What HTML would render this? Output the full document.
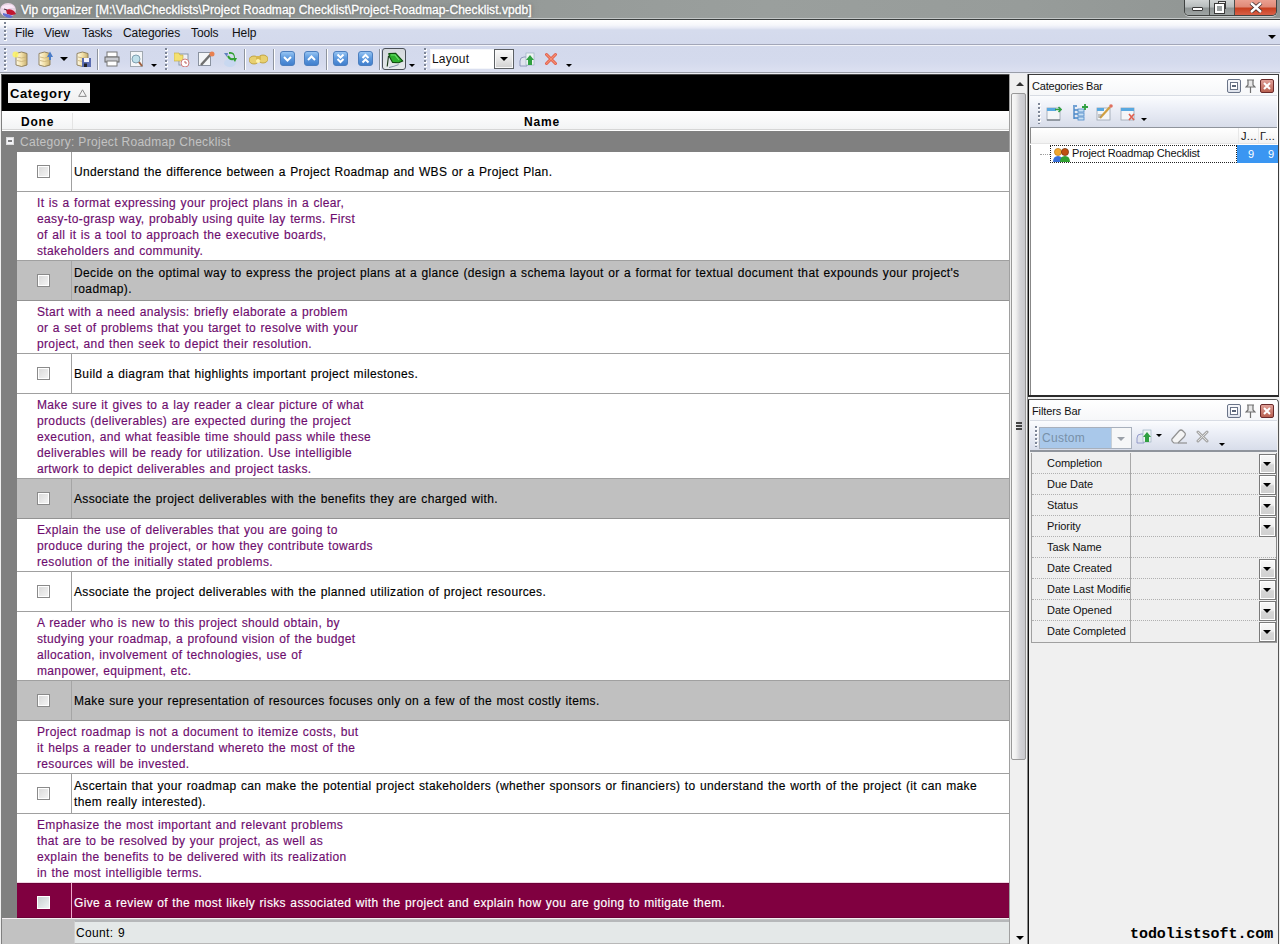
<!DOCTYPE html><html><head><meta charset="utf-8"><style>
*{margin:0;padding:0;box-sizing:border-box}
html,body{width:1280px;height:944px;overflow:hidden;background:#ededf0;font-family:"Liberation Sans",sans-serif;position:relative}
div,span{position:absolute}
.nw{white-space:nowrap}
#title{left:0;top:0;width:1280px;height:20px;background:linear-gradient(90deg,#8d9290,#939896 30%,#9a9f9d 60%,#979c9a 80%,#8f9492);border-bottom:1px solid #3c4040;box-shadow:inset 0 -1px 0 #c4c8c8}
#title .t{left:21px;top:3px;color:#fff;font-size:12px;white-space:nowrap;-webkit-text-stroke:0.3px #fff;letter-spacing:0.05px;text-shadow:0 0 3px #6a6e6c,0 0 6px #7a7e7c}
#menu{left:0;top:20px;width:1280px;height:26px;background:linear-gradient(#ffffff 0%,#f6f7fb 20%,#e6e9f5 32%,#d5dbed 40%,#d3d9ec 100%);border-bottom:1px solid #f4f5fa;box-shadow:inset 0 -1px 0 #a2a6b8}
#menu span{top:6px;font-size:12px;color:#111;letter-spacing:-0.1px}
#tool{left:0;top:46px;width:1280px;height:28px;background:linear-gradient(#d3d9ec 0%,#d4daed 60%,#dde1f1 100%);border-bottom:1px solid #eceef4;box-shadow:inset 0 -1px 0 #9a9ea8}
.grip{width:3px;background:repeating-linear-gradient(180deg,transparent 0 1px,#fff 1px 3px,transparent 3px 4px);}.grip:before{content:'';position:absolute;left:0;top:0;width:2px;height:100%;background:repeating-linear-gradient(180deg,#7d8596 0 2px,transparent 2px 4px)}
.sep{width:2px;border-left:1px solid #8e949e;border-right:1px solid #fff}
.dd{width:0;height:0;border-left:4px solid transparent;border-right:4px solid transparent;border-top:4px solid #000}
#grid{left:0;top:74px;width:1010px;height:870px;background:#808080;border-left:1px solid #f0f0f0;border-right:1px solid #a0a0a0;overflow:hidden}
#black{left:0;top:0;width:1008px;height:37px;background:#000;border-top:1px solid #4a4a4a;border-left:1px solid #555}
#catbtn{left:6px;top:8px;width:82px;height:20px;background:linear-gradient(#fafafa,#f0f0f0);font-weight:bold;font-size:13px;color:#000}
#hdr{left:1px;top:37px;width:1007px;height:20px;background:linear-gradient(#ffffff,#f2f3f4);border-bottom:1px solid #ffffff;box-shadow:inset 0 -1px 0 #d6d6d6}
#hdr span{font-weight:bold;font-size:12px;top:4px;letter-spacing:0.8px}
#grp{left:1px;top:57px;width:1007px;height:21px;background:#808080}
#grp .t{left:18px;top:4px;font-size:12px;color:#c3c3c3;letter-spacing:0.3px;word-spacing:0px;white-space:nowrap}
#rows{left:16px;top:78px;width:992px;height:792px}
.r{position:relative;width:992px;border-bottom:1px solid #a0a0a0;background:#fff}
.task{height:40px}
.task.g{background:#c0c0c0;border-bottom-color:#939393}
.task .d{left:54px;top:0;width:1px;height:39px;background:#a0a0a0}
.task.g .d{background:#a5a5a5}
.task .cb{left:20px;width:13px;height:13px;border:1px solid #8a8a8a;background:linear-gradient(135deg,#d8d8d8,#f6f6f6);box-shadow:inset 0 0 0 1px #fff}
.task .cb{top:13px}
.task .tx{left:57px;-webkit-text-stroke:0.15px currentColor;font-size:12px;letter-spacing:0.35px;word-spacing:0.75px;line-height:16px;color:#000;white-space:nowrap}
.pv{color:#6e0c6e;-webkit-text-stroke:0.15px currentColor;font-size:12px;letter-spacing:0.35px;word-spacing:0.75px;line-height:16px;white-space:nowrap}
.pv .tx{left:20px;top:3px}
</style></head><body>
<div id="title"><div class="t">Vip organizer [M:\Vlad\Checklists\Project Roadmap Checklist\Project-Roadmap-Checklist.vpdb]</div></div>
<div id="menu"><div class="grip" style="left:4px;top:2px;height:20px"></div><span style="left:15px">File</span><span style="left:44px">View</span><span style="left:82px">Tasks</span><span style="left:123px">Categories</span><span style="left:191px">Tools</span><span style="left:232px">Help</span><div class="dd" style="left:1268px;top:15px"></div></div>
<div id="tool"><div class="grip" style="left:4px;top:2px;height:23px"></div></div>
<div id="grid">
<div id="black"><div id="catbtn"><span style="left:2px;top:3px;letter-spacing:0.6px">Category</span><svg style="position:absolute;left:70px;top:6px" width="9" height="8" viewBox="0 0 9 8"><path d="M4.5 0.8 L8.3 7.4 L0.7 7.4Z" fill="none" stroke="#8a8a8a" stroke-width="1"/></svg></div></div>
<div id="hdr"><span style="left:19px">Done</span><span style="left:522px">Name</span><div style="left:70px;top:2px;width:1px;height:16px;background:#e4e4e4"></div></div>
<div id="grp"><div style="left:4px;top:6px;width:8px;height:8px;background:#f4f4f8;border:1px solid #dcdcdc"></div><div style="left:6px;top:9px;width:4px;height:2px;background:#333;transform:scaleY(0.6)"></div><div class="t">Category: Project Roadmap Checklist</div></div>
<div id="rows">
<div class="r task"><div class="d"></div><div class="cb"></div><div class="tx" style="top:12px">Understand the difference between a Project Roadmap and WBS or a Project Plan.</div></div>
<div class="r pv" style="height:69px"><div class="tx">It is a format expressing your project plans in a clear,<br>easy-to-grasp way, probably using quite lay terms. First<br>of all it is a tool to approach the executive boards,<br>stakeholders and community.</div></div>
<div class="r task g"><div class="d"></div><div class="cb"></div><div class="tx" style="top:4px">Decide on the optimal way to express the project plans at a glance (design a schema layout or a format for textual document that expounds your project&#x27;s<br>roadmap).</div></div>
<div class="r pv" style="height:53px"><div class="tx">Start with a need analysis: briefly elaborate a problem<br>or a set of problems that you target to resolve with your<br>project, and then seek to depict their resolution.</div></div>
<div class="r task"><div class="d"></div><div class="cb"></div><div class="tx" style="top:12px">Build a diagram that highlights important project milestones.</div></div>
<div class="r pv" style="height:85px"><div class="tx">Make sure it gives to a lay reader a clear picture of what<br>products (deliverables) are expected during the project<br>execution, and what feasible time should pass while these<br>deliverables will be ready for utilization. Use intelligible<br>artwork to depict deliverables and project tasks.</div></div>
<div class="r task g"><div class="d"></div><div class="cb"></div><div class="tx" style="top:12px">Associate the project deliverables with the benefits they are charged with.</div></div>
<div class="r pv" style="height:53px"><div class="tx">Explain the use of deliverables that you are going to<br>produce during the project, or how they contribute towards<br>resolution of the initially stated problems.</div></div>
<div class="r task"><div class="d"></div><div class="cb"></div><div class="tx" style="top:12px">Associate the project deliverables with the planned utilization of project resources.</div></div>
<div class="r pv" style="height:69px"><div class="tx">A reader who is new to this project should obtain, by<br>studying your roadmap, a profound vision of the budget<br>allocation, involvement of technologies, use of<br>manpower, equipment, etc.</div></div>
<div class="r task g"><div class="d"></div><div class="cb"></div><div class="tx" style="top:12px">Make sure your representation of resources focuses only on a few of the most costly items.</div></div>
<div class="r pv" style="height:53px"><div class="tx">Project roadmap is not a document to itemize costs, but<br>it helps a reader to understand whereto the most of the<br>resources will be invested.</div></div>
<div class="r task"><div class="d"></div><div class="cb"></div><div class="tx" style="top:4px">Ascertain that your roadmap can make the potential project stakeholders (whether sponsors or financiers) to understand the worth of the project (it can make<br>them really interested).</div></div>
<div class="r pv" style="height:69px;border-bottom-color:#f2d4e4"><div class="tx">Emphasize the most important and relevant problems<br>that are to be resolved by your project, as well as<br>explain the benefits to be delivered with its realization<br>in the most intelligible terms.</div></div>
<div class="r task" style="background:#800040;border-bottom:1px solid #f0d0e0;height:36px;box-shadow:inset 0 1px 0 #6c0036,inset 0 -1px 0 #6c0036"><div class="d" style="background:#f0a8cc;height:35px"></div><div class="cb" style="top:13px;border-color:#fff;box-shadow:none;background:linear-gradient(135deg,#c8d0d0,#f0f4f4)"></div><div class="tx" style="top:12px;color:#fff">Give a review of the most likely risks associated with the project and explain how you are going to mitigate them.</div></div>
</div>
<div style="left:1px;top:844px;width:1007px;height:26px;background:#c2c2c2;border-top:1px solid #f4eef2"><div style="left:72px;top:1px;width:935px;height:24px;background:#e4e8e8;border-top:2px solid #b6b8ba;border-left:1px solid #d0d0d0;border-bottom:1px solid #b8b8b8"></div><span style="left:74px;top:7px;font-size:12px;letter-spacing:0.35px;word-spacing:0.75px">Count: 9</span></div>
</div>
<svg style="position:absolute;left:0;top:2px" width="17" height="16" viewBox="0 0 17 16"><ellipse cx="8" cy="8" rx="8" ry="7" fill="#e8d4e4"/><path d="M1 5 Q6 2 12 3 L15 6 Q10 5 6 8Z" fill="#fbe8f8"/><path d="M6 8 Q10 6 14 9 L16 12 Q12 14 7 12Z" fill="#c01830"/><path d="M3 11 Q8 12 13 14 L11 16 Q6 16 3 13Z" fill="#6270d0"/><path d="M4 7 L7 8" stroke="#503040" stroke-width="1.2"/></svg>
<div style="left:1184px;top:0;width:93px;height:16px;border:1px solid #3f4241;border-top:none;border-radius:0 0 5px 5px;overflow:hidden;box-shadow:0 1px 0 #c8cccc"><div style="left:0;top:0;width:25px;height:15px;background:linear-gradient(#cfd3d3 0%,#b8bdbd 45%,#8f9595 55%,#9ea4a3 100%);border-right:1px solid #4a4d4c"></div><div style="left:25px;top:0;width:25px;height:15px;background:linear-gradient(#cfd3d3 0%,#b8bdbd 45%,#8f9595 55%,#9ea4a3 100%);border-right:1px solid #4a4d4c"></div><div style="left:50px;top:0;width:43px;height:15px;background:linear-gradient(#eaa090 0%,#e08a78 45%,#c84020 55%,#d86048 100%)"></div><div style="left:7px;top:7px;width:11px;height:4px;background:#fff;border:1px solid #3a3a3a;border-radius:1px"></div><div style="left:33px;top:1px;width:8px;height:8px;border:1px solid #3a3a3a;background:#fff;box-shadow:inset 0 0 0 1px #eee"></div><div style="left:30px;top:4px;width:9px;height:9px;border:2px solid #fff;outline:1px solid #3a3a3a;background:#9aa0a0"></div><svg style="position:absolute;left:64px;top:2px" width="14" height="11" viewBox="0 0 14 11"><path d="M2 1 L12 10 M12 1 L2 10" stroke="#3a2a2a" stroke-width="4"/><path d="M2 1 L12 10 M12 1 L2 10" stroke="#fff" stroke-width="2.4"/></svg></div>
<svg style="position:absolute;left:12px;top:50px" width="18" height="18" viewBox="0 0 18 18"><defs><linearGradient id="dbg12" x1="0" y1="0" x2="1" y2="0"><stop offset="0" stop-color="#fffbe8"/><stop offset="0.5" stop-color="#f2e0a8"/><stop offset="1" stop-color="#c8b070"/></linearGradient></defs><path d="M4 3.5 Q9.5 0.5 15 3.5 L15 15 Q9.5 18 4 15 Z" fill="url(#dbg12)" stroke="#8a7a58" stroke-width="0.9"/><path d="M5 7 Q9.5 9 14 7 M5 10.5 Q9.5 12.5 14 10.5" fill="none" stroke="#c8b078" stroke-width="0.8"/><circle cx="3.5" cy="4.5" r="3" fill="#fff460" opacity="0.85"/></svg><svg style="position:absolute;left:35px;top:50px" width="18" height="18" viewBox="0 0 18 18"><defs><linearGradient id="dbg35" x1="0" y1="0" x2="1" y2="0"><stop offset="0" stop-color="#fffbe8"/><stop offset="0.5" stop-color="#f2e0a8"/><stop offset="1" stop-color="#c8b070"/></linearGradient></defs><path d="M4 3.5 Q9.5 0.5 15 3.5 L15 15 Q9.5 18 4 15 Z" fill="url(#dbg35)" stroke="#8a7a58" stroke-width="0.9"/><path d="M5 7 Q9.5 9 14 7 M5 10.5 Q9.5 12.5 14 10.5" fill="none" stroke="#c8b078" stroke-width="0.8"/><path d="M15 1.5 L18 7 L16 7 L16 10 L14 10 L14 7 L12 7Z" fill="#4a7cc8"/></svg><div class="dd" style="left:60px;top:57px;border-width:4px 4px 4px 4px;border-bottom:none"></div><svg style="position:absolute;left:73px;top:50px" width="18" height="18" viewBox="0 0 18 18"><defs><linearGradient id="dbg73" x1="0" y1="0" x2="1" y2="0"><stop offset="0" stop-color="#fffbe8"/><stop offset="0.5" stop-color="#f2e0a8"/><stop offset="1" stop-color="#c8b070"/></linearGradient></defs><path d="M4 3.5 Q9.5 0.5 15 3.5 L15 15 Q9.5 18 4 15 Z" fill="url(#dbg73)" stroke="#8a7a58" stroke-width="0.9"/><path d="M5 7 Q9.5 9 14 7 M5 10.5 Q9.5 12.5 14 10.5" fill="none" stroke="#c8b078" stroke-width="0.8"/><rect x="9" y="8" width="9" height="9" fill="#5a6cb0"/><rect x="11" y="8" width="5" height="4" fill="#f4f4ff"/><rect x="11" y="13.5" width="3" height="3.5" fill="#222"/></svg><div class="sep" style="left:97px;top:49px;height:21px"></div><svg style="position:absolute;left:104px;top:51px" width="16" height="16" viewBox="0 0 16 16"><rect x="3" y="1" width="10" height="5" fill="#fff" stroke="#777"/><rect x="1" y="6" width="14" height="5" fill="#c8cad0" stroke="#666"/><rect x="3" y="10" width="10" height="5" fill="#fff" stroke="#777"/></svg><svg style="position:absolute;left:130px;top:51px" width="14" height="16" viewBox="0 0 14 16"><rect x="0.5" y="0.5" width="12" height="15" fill="#f4f6f8" stroke="#a0a8b0"/><circle cx="6" cy="8" r="4" fill="#bfe0ea" stroke="#80a0b0"/><path d="M9 11 L12 15" stroke="#a06040" stroke-width="2"/></svg><div class="dd" style="left:151px;top:64px;border-width:3px 3px 0 3px"></div><div class="grip" style="left:165px;top:48px;height:22px"></div><svg style="position:absolute;left:174px;top:51px" width="16" height="16" viewBox="0 0 16 16"><rect x="5" y="3" width="9" height="11" fill="#f0f0f4" stroke="#8898a8"/><path d="M0 2 L5 2 L6 4 L9 4 L9 10 L0 10Z" fill="#f4e070" stroke="#c0a840" stroke-width="0.6"/><circle cx="11" cy="12" r="4" fill="#fff" stroke="#d08080"/><path d="M11 10 L11 12 L13 12" stroke="#c06060" fill="none"/></svg><svg style="position:absolute;left:198px;top:51px" width="17" height="16" viewBox="0 0 17 16"><rect x="0.5" y="1.5" width="12" height="13" fill="#f4f6f8" stroke="#8a92a0"/><path d="M3 14 L13 3" stroke="#707070" stroke-width="2.5"/><circle cx="14" cy="3" r="2.5" fill="#e88050"/></svg><svg style="position:absolute;left:220px;top:50px" width="18" height="18" viewBox="0 0 18 18"><ellipse cx="10" cy="13" rx="6" ry="4" fill="#c8d8f0"/><path d="M4 3 L8 3 L7 7Z" fill="#6080c0"/><path d="M9 4 Q14 3 14 8 L12 8 L15 12 L17 8 L15 8 Q15 1 9 2Z" fill="#30a030"/><path d="M8 6 Q10 10 13 9" stroke="#30a030" stroke-width="2" fill="none"/></svg><div class="sep" style="left:244px;top:49px;height:21px"></div><svg style="position:absolute;left:249px;top:53px" width="19" height="12" viewBox="0 0 19 12"><ellipse cx="5" cy="7" rx="5" ry="4" fill="#e8d070" stroke="#b89830" stroke-width="0.8"/><ellipse cx="14" cy="6" rx="5" ry="4" fill="#e8d070" stroke="#b89830" stroke-width="0.8"/><rect x="7" y="3" width="5" height="4" fill="#d8b850"/><circle cx="9" cy="8" r="2" fill="#fff4b0"/></svg><div class="sep" style="left:273px;top:49px;height:21px"></div><svg style="position:absolute;left:280px;top:51px" width="15" height="15" viewBox="0 0 15 15"><defs><linearGradient id="bg280" x1="0" y1="0" x2="0" y2="1"><stop offset="0" stop-color="#9cc8f4"/><stop offset="0.45" stop-color="#5f9be0"/><stop offset="1" stop-color="#3f7dcc"/></linearGradient></defs><rect x="0.5" y="0.5" width="14" height="14" rx="2.5" fill="url(#bg280)" stroke="#4d7fbf"/><path d="M4 6 L7.5 9.5 L11 6" stroke="#fff" stroke-width="2" fill="none"/></svg><svg style="position:absolute;left:304px;top:51px" width="15" height="15" viewBox="0 0 15 15"><defs><linearGradient id="bg304" x1="0" y1="0" x2="0" y2="1"><stop offset="0" stop-color="#9cc8f4"/><stop offset="0.45" stop-color="#5f9be0"/><stop offset="1" stop-color="#3f7dcc"/></linearGradient></defs><rect x="0.5" y="0.5" width="14" height="14" rx="2.5" fill="url(#bg304)" stroke="#4d7fbf"/><path d="M4 9 L7.5 5.5 L11 9" stroke="#fff" stroke-width="2" fill="none"/></svg><div class="sep" style="left:326px;top:49px;height:21px"></div><svg style="position:absolute;left:333px;top:51px" width="15" height="15" viewBox="0 0 15 15"><defs><linearGradient id="bg333" x1="0" y1="0" x2="0" y2="1"><stop offset="0" stop-color="#9cc8f4"/><stop offset="0.45" stop-color="#5f9be0"/><stop offset="1" stop-color="#3f7dcc"/></linearGradient></defs><rect x="0.5" y="0.5" width="14" height="14" rx="2.5" fill="url(#bg333)" stroke="#4d7fbf"/><path d="M4.5 3.5 L7.5 6.5 L10.5 3.5 M4.5 8 L7.5 11 L10.5 8" stroke="#fff" stroke-width="2" fill="none"/></svg><svg style="position:absolute;left:358px;top:51px" width="15" height="15" viewBox="0 0 15 15"><defs><linearGradient id="bg358" x1="0" y1="0" x2="0" y2="1"><stop offset="0" stop-color="#9cc8f4"/><stop offset="0.45" stop-color="#5f9be0"/><stop offset="1" stop-color="#3f7dcc"/></linearGradient></defs><rect x="0.5" y="0.5" width="14" height="14" rx="2.5" fill="url(#bg358)" stroke="#4d7fbf"/><path d="M4.5 7 L7.5 4 L10.5 7 M4.5 11.5 L7.5 8.5 L10.5 11.5" stroke="#fff" stroke-width="2" fill="none"/></svg><div class="sep" style="left:379px;top:49px;height:21px"></div><div style="left:382px;top:48px;width:24px;height:22px;border:1px solid #4a5058;border-radius:3px;background:linear-gradient(#d4d8dc,#e6eaec)"></div><svg style="position:absolute;left:385px;top:50px" width="19" height="19" viewBox="0 0 19 19"><path d="M3.5 6 L2.2 16.5" stroke="#1a3a1a" stroke-width="1.1" fill="none"/><path d="M4 17.5 Q9 16.5 13.6 14.6" stroke="#8090a8" stroke-width="1" fill="none"/><path d="M3.8 3.5 L10.5 3.2 L17.8 11.1 L13.6 12.7 L7.6 12.4 L4.4 6.7 Z" fill="#2cb02c" stroke="#0e4a0e" stroke-width="1.1" stroke-linejoin="round"/><path d="M6 5 L10 5 L14 10" stroke="#6ee06e" stroke-width="1.2" fill="none"/></svg><div class="dd" style="left:409px;top:64px;border-width:3px 3px 0 3px"></div><div class="grip" style="left:424px;top:48px;height:22px"></div><div style="left:430px;top:49px;width:84px;height:20px;background:#fff;border:1px solid #f4f6fa"></div><div style="left:494px;top:49px;width:20px;height:20px;border:1px solid #5c6064;background:linear-gradient(#fafafa 0%,#e8e8e8 50%,#d0d0d0 100%);box-shadow:inset 0 0 0 1px #f8f8f8"></div><div class="dd" style="left:500px;top:57px;border-width:4px 4px 0 4px"></div><span style="left:432px;top:52px;font-size:12px;color:#111;letter-spacing:0.2px">Layout</span><svg style="position:absolute;left:518px;top:51px" width="18" height="17" viewBox="0 0 18 17"><path d="M2 10 Q2 6 6 6 L9 6 L9 15 L2 15Z" fill="#e0e4ee" stroke="#8088b0" stroke-width="0.8"/><rect x="8" y="2" width="8" height="12" fill="#eef4f4" stroke="#90a8b8" stroke-width="0.6"/><path d="M12 4 L16 9 L14 9 L14 14 L10 14 L10 9 L8 9Z" fill="#30a040"/></svg><svg style="position:absolute;left:544px;top:52px" width="14" height="14" viewBox="0 0 14 14"><path d="M2.5 2.5 L11.5 11.5 M11.5 2.5 L2.5 11.5" stroke="#e05848" stroke-width="3" stroke-linecap="round"/><path d="M2.5 2.5 L11.5 11.5 M11.5 2.5 L2.5 11.5" stroke="#f49070" stroke-width="1.2" stroke-linecap="round"/></svg><div class="dd" style="left:566px;top:64px;border-width:3px 3px 0 3px"></div>
<div style="left:1010px;top:74px;width:17px;height:870px;background:#f0f0f0"><div class="dd" style="left:6px;top:8px;border-width:0 4px 4px 4px;border-top:none;border-bottom:4px solid #333"></div><div style="left:1px;top:19px;width:15px;height:667px;border:1px solid #999;border-radius:2px;background:linear-gradient(90deg,#f8f8f8 0%,#f0f0f0 30%,#d4d4d8 60%,#c8c8cc 100%)"></div><div style="left:6px;top:348px;width:6px;height:2px;background:#444;box-shadow:0 3px 0 #444,0 6px 0 #444"></div><div class="dd" style="left:6px;top:862px;border-width:4px 4px 0 4px"></div></div>
<div style="left:1027px;top:74px;width:253px;height:870px;background:#f0f0f0;border-left:1px solid #888"></div><div style="left:1028px;top:74px;width:251px;height:323px;border:1px solid #3c3c3c;border-left:1px solid #111;border-bottom:2px solid #2a2a2a;background:#fff;box-shadow:inset 1px 0 0 #eee"><div style="left:1px;top:0;width:247px;height:21px;background:linear-gradient(#ffffff,#f6f7f9);border-bottom:1px solid #d8dce4"><span style="left:2px;top:5px;font-size:11px;color:#111;letter-spacing:-0.2px">Categories Bar</span></div><div style="left:198px;top:4px;width:14px;height:14px;border:1px solid #6a7488;border-radius:2px;background:linear-gradient(#f8f9fc,#dfe3ec)"><div style="left:2px;top:2px;width:8px;height:8px;border:1px solid #6a7488;background:#fff"></div><div style="left:4px;top:5px;width:4px;height:2px;background:#5a6478"></div></div><svg style="position:absolute;left:216px;top:4px" width="11" height="15" viewBox="0 0 11 15"><path d="M2 1 L9 1 M3 1 L3 6 L1 8 L10 8 L8 6 L8 1 M5.5 8 L5.5 14" stroke="#707070" stroke-width="1.2" fill="#e8e8e8"/></svg><div style="left:231px;top:4px;width:14px;height:14px;border:1px solid #6a2a2a;border-radius:2px;background:linear-gradient(#e0a098,#b86050)"><svg style="position:absolute;left:2px;top:2px" width="8" height="8" viewBox="0 0 8 8"><path d="M1 1 L7 7 M7 1 L1 7" stroke="#fff" stroke-width="2"/></svg></div><div style="left:1px;top:21px;width:247px;height:32px;background:linear-gradient(#fbfcfe 0%,#eceff7 40%,#d8ddea 100%);border-bottom:1px solid #8f949c"><div class="grip" style="left:8px;top:7px;height:21px"></div><svg style="position:absolute;left:16px;top:9px" width="16" height="16" viewBox="0 0 16 16"><rect x="1" y="3" width="13" height="12" fill="#f4f6f8" stroke="#9aa4b0" stroke-width="0.8"/><rect x="1" y="3" width="9" height="3" fill="#58a8e0"/><path d="M9 4.5 L15 4.5 M12.5 2 L15 4.5 L12.5 7" stroke="#30a040" stroke-width="1.6" fill="none"/><path d="M1 15 L14 15" stroke="#707880" stroke-width="1.2"/></svg><svg style="position:absolute;left:41px;top:8px" width="17" height="17" viewBox="0 0 17 17"><path d="M2 2 L6 2 M3 3 L3 15 M3 6 L8 6 M3 10 L8 10 M3 14 L8 14" stroke="#4a88c8" stroke-width="1.4"/><rect x="7" y="5" width="6" height="3" fill="#c8e0f4" stroke="#4a88c8" stroke-width="0.8"/><rect x="7" y="9" width="6" height="3" fill="#c8e0f4" stroke="#4a88c8" stroke-width="0.8"/><rect x="7" y="13" width="6" height="3" fill="#c8e0f4" stroke="#4a88c8" stroke-width="0.8"/><path d="M11 3 L17 3 M14 0 L14 6" stroke="#30a040" stroke-width="1.8"/></svg><svg style="position:absolute;left:66px;top:8px" width="17" height="17" viewBox="0 0 17 17"><rect x="1" y="4" width="13" height="12" fill="#f4f6f8" stroke="#9aa4b0" stroke-width="0.8"/><rect x="1" y="4" width="7" height="3" fill="#58a8e0"/><path d="M4 14 L14 3" stroke="#d0a040" stroke-width="2.2"/><circle cx="15" cy="2" r="1.8" fill="#e07060"/><path d="M2 11 L6 11 M2 13 L5 13" stroke="#909090"/></svg><svg style="position:absolute;left:90px;top:9px" width="17" height="17" viewBox="0 0 17 17"><rect x="1" y="3" width="13" height="12" fill="#f4f6f8" stroke="#9aa4b0" stroke-width="0.8"/><rect x="1" y="3" width="13" height="3" fill="#58a8e0"/><path d="M9 9 L14 15 M14 9 L9 15" stroke="#e06050" stroke-width="1.6"/></svg><div class="dd" style="left:111px;top:22px;border-width:3px 3px 0 3px"></div></div><div style="left:1px;top:53px;width:247px;height:16px;background:linear-gradient(#ffffff,#f2f2f2);border-bottom:1px solid #e4e4e4;border-left:1px solid #888"><div style="left:207px;top:0;width:1px;height:15px;background:#e8e8e8"></div><div style="left:227px;top:0;width:1px;height:15px;background:#e8e8e8"></div><span style="left:210px;top:2px;font-size:11px;color:#111;letter-spacing:0.3px">J...</span><span style="left:229px;top:2px;font-size:11px;color:#111;letter-spacing:0.3px">&#915;...</span></div><div style="left:1px;top:70px;width:1px;height:250px;background:#888"></div><div style="left:11px;top:79px;width:10px;height:1px;border-top:1px dotted #a0a0a0"></div><div style="left:21px;top:70px;width:187px;height:18px;border:1px dotted #222"></div><svg style="position:absolute;left:24px;top:72px" width="17" height="16" viewBox="0 0 17 16"><circle cx="5" cy="5" r="3.6" fill="#f0a830" stroke="#b07010" stroke-width="0.6"/><path d="M0 15 Q0 9 5 9 Q10 9 10 15Z" fill="#3870d8"/><circle cx="12" cy="5" r="3.6" fill="#c05010" stroke="#602800" stroke-width="0.6"/><path d="M7 15 Q7 9 12 9 Q17 9 17 15Z" fill="#30a030"/></svg><span style="left:43px;top:72px;font-size:11px;color:#111;letter-spacing:-0.2px">Project Roadmap Checklist</span><div style="left:208px;top:70px;width:41px;height:18px;background:#3a96f2"></div><span style="left:219px;top:73px;font-size:11px;color:#fff">9</span><span style="left:239px;top:73px;font-size:11px;color:#fff">9</span></div><div style="left:1028px;top:399px;width:251px;height:545px;border:1px solid #555;border-left:1px solid #111;border-bottom:none;border-radius:0 4px 0 0;background:#f0f0f0"><div style="left:1px;top:0;width:247px;height:21px;background:linear-gradient(#ffffff,#f6f7f9);border-bottom:1px solid #d8dce4"><span style="left:2px;top:5px;font-size:11px;color:#111;letter-spacing:-0.1px">Filters Bar</span></div><div style="left:198px;top:4px;width:14px;height:14px;border:1px solid #6a7488;border-radius:2px;background:linear-gradient(#f8f9fc,#dfe3ec)"><div style="left:2px;top:2px;width:8px;height:8px;border:1px solid #6a7488;background:#fff"></div><div style="left:4px;top:5px;width:4px;height:2px;background:#5a6478"></div></div><svg style="position:absolute;left:216px;top:4px" width="11" height="15" viewBox="0 0 11 15"><path d="M2 1 L9 1 M3 1 L3 6 L1 8 L10 8 L8 6 L8 1 M5.5 8 L5.5 14" stroke="#707070" stroke-width="1.2" fill="#e8e8e8"/></svg><div style="left:231px;top:4px;width:14px;height:14px;border:1px solid #6a2a2a;border-radius:2px;background:linear-gradient(#e0a098,#b86050)"><svg style="position:absolute;left:2px;top:2px" width="8" height="8" viewBox="0 0 8 8"><path d="M1 1 L7 7 M7 1 L1 7" stroke="#fff" stroke-width="2"/></svg></div><div style="left:1px;top:21px;width:247px;height:31px;background:linear-gradient(#fbfcfe 0%,#eceff7 40%,#d8ddea 100%);border-bottom:2px solid #8f949c"><div class="grip" style="left:5px;top:5px;height:21px"></div><div style="left:9px;top:6px;width:93px;height:22px;background:#a9c8ea;border:1px solid #a8b0bc"></div><div style="left:81px;top:7px;width:20px;height:20px;background:#f6f7f8;border-left:1px solid #c8d0d8"></div><div class="dd" style="left:87px;top:16px;border-width:4px 4px 0 4px;border-top-color:#9aa0a8"></div><span style="left:12px;top:10px;font-size:12px;color:#7890a8;letter-spacing:0.3px">Custom</span><svg style="position:absolute;left:106px;top:7px" width="18" height="17" viewBox="0 0 18 17"><path d="M1 10 Q1 6 5 6 L8 6 L8 15 L1 15Z" fill="#e0e4ee" stroke="#8088c0" stroke-width="0.8"/><rect x="7" y="2" width="8" height="12" fill="#eef4f4" stroke="#90a8b8" stroke-width="0.6"/><path d="M11 4 L15 9 L13 9 L13 14 L9 14 L9 9 L7 9Z" fill="#30a040"/></svg><div class="dd" style="left:126px;top:13px;border-width:3px 3px 0 3px"></div><svg style="position:absolute;left:140px;top:8px" width="18" height="15" viewBox="0 0 18 15"><path d="M2 10 L9 2 Q11 0 13 2 L15 4 Q16 6 14 8 L8 14 L4 14 Q1 12 2 10Z" fill="#f4f4f4" stroke="#909090" stroke-width="1.2"/><path d="M8 14 L17 14" stroke="#909090" stroke-width="1.2"/></svg><svg style="position:absolute;left:166px;top:9px" width="13" height="13" viewBox="0 0 13 13"><path d="M2 2 L11 11 M11 2 L2 11" stroke="#a8a8a8" stroke-width="3" stroke-linecap="round"/><path d="M2 2 L11 11 M11 2 L2 11" stroke="#e0e0e0" stroke-width="1"/></svg><div class="dd" style="left:189px;top:22px;border-width:3px 3px 0 3px"></div></div><div style="left:2px;top:53px;width:246px;height:190px;background:#efefef;border:1px solid #a0a0a0;border-right-color:#888;border-top:none;overflow:hidden"><div style="left:98px;top:0;width:1px;height:189px;background:#a8a8a8"></div><span style="left:15px;top:4px;width:83px;overflow:hidden;white-space:nowrap;font-size:11px;color:#111;letter-spacing:-0.05px;height:16px">Completion</span><div style="left:0;top:20px;width:246px;height:1px;border-top:1px dotted #b0b0b0"></div><div style="left:227px;top:1px;width:17px;height:20px;border:1px solid #7a7a7a;background:linear-gradient(#f8f8f8 0%,#f0f0f0 45%,#d6d6d6 55%,#d0d0d0 100%);box-shadow:inset 0 0 0 1px #fff"><div class="dd" style="left:3px;top:7px;border-width:4px 4px 0 4px"></div></div><span style="left:15px;top:25px;width:83px;overflow:hidden;white-space:nowrap;font-size:11px;color:#111;letter-spacing:-0.05px;height:16px">Due Date</span><div style="left:0;top:41px;width:246px;height:1px;border-top:1px dotted #b0b0b0"></div><div style="left:227px;top:22px;width:17px;height:20px;border:1px solid #7a7a7a;background:linear-gradient(#f8f8f8 0%,#f0f0f0 45%,#d6d6d6 55%,#d0d0d0 100%);box-shadow:inset 0 0 0 1px #fff"><div class="dd" style="left:3px;top:7px;border-width:4px 4px 0 4px"></div></div><span style="left:15px;top:46px;width:83px;overflow:hidden;white-space:nowrap;font-size:11px;color:#111;letter-spacing:-0.05px;height:16px">Status</span><div style="left:0;top:62px;width:246px;height:1px;border-top:1px dotted #b0b0b0"></div><div style="left:227px;top:43px;width:17px;height:20px;border:1px solid #7a7a7a;background:linear-gradient(#f8f8f8 0%,#f0f0f0 45%,#d6d6d6 55%,#d0d0d0 100%);box-shadow:inset 0 0 0 1px #fff"><div class="dd" style="left:3px;top:7px;border-width:4px 4px 0 4px"></div></div><span style="left:15px;top:67px;width:83px;overflow:hidden;white-space:nowrap;font-size:11px;color:#111;letter-spacing:-0.05px;height:16px">Priority</span><div style="left:0;top:83px;width:246px;height:1px;border-top:1px dotted #b0b0b0"></div><div style="left:227px;top:64px;width:17px;height:20px;border:1px solid #7a7a7a;background:linear-gradient(#f8f8f8 0%,#f0f0f0 45%,#d6d6d6 55%,#d0d0d0 100%);box-shadow:inset 0 0 0 1px #fff"><div class="dd" style="left:3px;top:7px;border-width:4px 4px 0 4px"></div></div><span style="left:15px;top:88px;width:83px;overflow:hidden;white-space:nowrap;font-size:11px;color:#111;letter-spacing:-0.05px;height:16px">Task Name</span><div style="left:0;top:104px;width:246px;height:1px;border-top:1px dotted #b0b0b0"></div><span style="left:15px;top:109px;width:83px;overflow:hidden;white-space:nowrap;font-size:11px;color:#111;letter-spacing:-0.05px;height:16px">Date Created</span><div style="left:0;top:125px;width:246px;height:1px;border-top:1px dotted #b0b0b0"></div><div style="left:227px;top:106px;width:17px;height:20px;border:1px solid #7a7a7a;background:linear-gradient(#f8f8f8 0%,#f0f0f0 45%,#d6d6d6 55%,#d0d0d0 100%);box-shadow:inset 0 0 0 1px #fff"><div class="dd" style="left:3px;top:7px;border-width:4px 4px 0 4px"></div></div><span style="left:15px;top:130px;width:83px;overflow:hidden;white-space:nowrap;font-size:11px;color:#111;letter-spacing:-0.05px;height:16px">Date Last Modified</span><div style="left:0;top:146px;width:246px;height:1px;border-top:1px dotted #b0b0b0"></div><div style="left:227px;top:127px;width:17px;height:20px;border:1px solid #7a7a7a;background:linear-gradient(#f8f8f8 0%,#f0f0f0 45%,#d6d6d6 55%,#d0d0d0 100%);box-shadow:inset 0 0 0 1px #fff"><div class="dd" style="left:3px;top:7px;border-width:4px 4px 0 4px"></div></div><span style="left:15px;top:151px;width:83px;overflow:hidden;white-space:nowrap;font-size:11px;color:#111;letter-spacing:-0.05px;height:16px">Date Opened</span><div style="left:0;top:167px;width:246px;height:1px;border-top:1px dotted #b0b0b0"></div><div style="left:227px;top:148px;width:17px;height:20px;border:1px solid #7a7a7a;background:linear-gradient(#f8f8f8 0%,#f0f0f0 45%,#d6d6d6 55%,#d0d0d0 100%);box-shadow:inset 0 0 0 1px #fff"><div class="dd" style="left:3px;top:7px;border-width:4px 4px 0 4px"></div></div><span style="left:15px;top:172px;width:83px;overflow:hidden;white-space:nowrap;font-size:11px;color:#111;letter-spacing:-0.05px;height:16px">Date Completed</span><div style="left:227px;top:169px;width:17px;height:20px;border:1px solid #7a7a7a;background:linear-gradient(#f8f8f8 0%,#f0f0f0 45%,#d6d6d6 55%,#d0d0d0 100%);box-shadow:inset 0 0 0 1px #fff"><div class="dd" style="left:3px;top:7px;border-width:4px 4px 0 4px"></div></div></div></div><span style="left:1130px;top:926px;font-family:'Liberation Mono',monospace;font-weight:bold;font-size:15px;color:#000;letter-spacing:-0.05px">todolistsoft.com</span>
</body></html>
